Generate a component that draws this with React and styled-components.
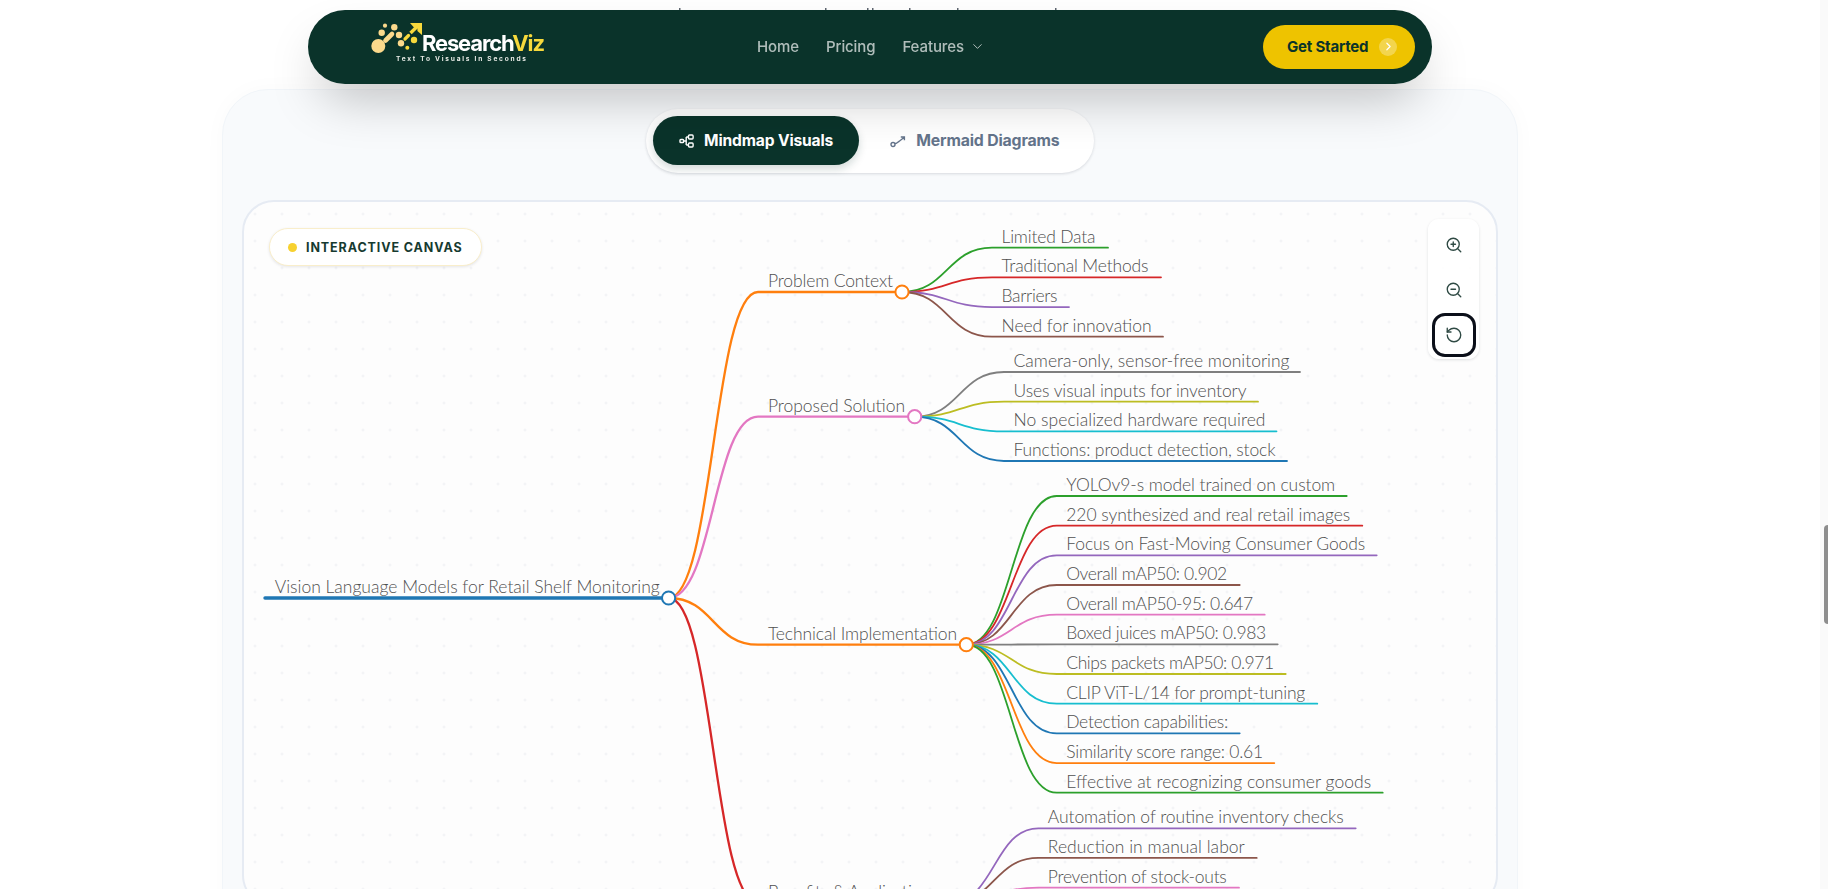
import React from "react"
import styled, { createGlobalStyle } from "styled-components"
import { ZoomIn, ZoomOut, RotateCcw, ChevronDown, ChevronRight } from "lucide-react"

const GREEN = "#0a332a"
const UI_FONT = `Inter, "Noto Sans", sans-serif`
const MAP_FONT = `Lato, "Open Sans", sans-serif`

const GlobalStyle = createGlobalStyle`
  html, body {
    margin: 0;
    padding: 0;
    height: 889px;
    overflow: hidden;
    background: #fff;
    font-family: ${UI_FONT};
  }
  * { box-sizing: border-box; }
`

const Shell = styled.div`
  width: 1740px;
  height: 889px;
  padding-top: 10px;
  display: flex;
  flex-direction: column;
  align-items: center;
  overflow: hidden;
`

const Nav = styled.nav`
  position: relative;
  z-index: 5;
  flex: none;
  width: 1124px;
  height: 73.5px;
  padding: 0 17px 0 52px;
  display: flex;
  align-items: center;
  background: ${GREEN};
  border-radius: 37px;
  box-shadow: 0 25px 50px -12px rgba(0, 0, 0, 0.25);
`

const NavLinks = styled.div`
  margin-left: 197px;
  display: flex;
  align-items: center;
  gap: 27px;
`

const NavLink = styled.a`
  display: flex;
  align-items: center;
  gap: 6px;
  color: rgba(255, 255, 255, 0.68);
  font-size: 15px;
  font-weight: 500;
  letter-spacing: -0.1px;
`

const GetStarted = styled.button`
  margin-left: auto;
  width: 152px;
  height: 44px;
  padding: 0 18px 0 24px;
  display: flex;
  align-items: center;
  justify-content: space-between;
  border: 0;
  border-radius: 22px;
  background: #eec300;
  color: ${GREEN};
  font-family: inherit;
  font-size: 15px;
  font-weight: 700;
  letter-spacing: -0.2px;
`

const ArrowDot = styled.span`
  width: 18px;
  height: 18px;
  display: flex;
  align-items: center;
  justify-content: center;
  border-radius: 50%;
  background: rgba(255, 255, 255, 0.3);
  color: #fff;
`

const Panel = styled.section`
  flex: none;
  width: 1296px;
  margin-top: 5.5px;
  padding: 19px 19px 60px;
  display: flex;
  flex-direction: column;
  align-items: center;
  background: #f8fafc;
  border: 1px solid #f1f5f9;
  border-radius: 46px;
  box-shadow: 0 0 24px rgba(15, 23, 42, 0.025);
`

const TabBar = styled.div`
  width: 448px;
  height: 64px;
  padding: 7px;
  display: flex;
  gap: 3px;
  background: #fff;
  border-radius: 32px;
  box-shadow: 0 1px 3px rgba(15, 23, 42, 0.14);
`

const Tab = styled.button`
  height: 49px;
  padding: ${(p) => (p.$active ? "0 26px" : "0 24px 0 28px")};
  display: flex;
  align-items: center;
  gap: ${(p) => (p.$active ? "9px" : "10px")};
  flex: none;
  border: 0;
  border-radius: 25px;
  font-family: inherit;
  font-size: ${(p) => (p.$active ? "15.6px" : "15.8px")};
  font-weight: 700;
  letter-spacing: -0.15px;
  background: ${(p) => (p.$active ? GREEN : "transparent")};
  color: ${(p) => (p.$active ? "#fff" : "#64748b")};
  box-shadow: ${(p) => (p.$active ? "0 4px 8px rgba(10, 51, 42, 0.18)" : "none")};
`

const Canvas = styled.div`
  position: relative;
  flex: none;
  width: 1256px;
  height: 707px;
  margin-top: 27px;
  background-color: #fdfdfd;
  background-image: radial-gradient(circle, #f0f1f4 1px, transparent 1.4px);
  background-size: 27px 27px;
  background-position: -2.5px -1.5px;
  border: 2px solid #e6ebf3;
  border-radius: 32px;
  overflow: hidden;
`

const Badge = styled.div`
  position: absolute;
  left: 25px;
  top: 26px;
  width: 213px;
  height: 38px;
  padding-left: 18px;
  display: flex;
  align-items: center;
  gap: 9px;
  background: #fff;
  border: 1px solid #f9eecb;
  border-radius: 19px;
  box-shadow: 0 1px 3px rgba(15, 23, 42, 0.1);
  color: #163a30;
  font-size: 12.5px;
  font-weight: 700;
  letter-spacing: 0.9px;
  text-transform: uppercase;
`

const BadgeDot = styled.span`
  width: 9px;
  height: 9px;
  border-radius: 50%;
  background: #f7d130;
`

const Controls = styled.div`
  position: absolute;
  right: 17px;
  top: 17px;
  width: 51px;
  height: 140px;
  padding: 4px 3px 0;
  display: flex;
  flex-direction: column;
  align-items: center;
  gap: 1px;
  background: rgba(255, 255, 255, 0.85);
  border-radius: 11px;
  box-shadow: 0 1px 3px rgba(15, 23, 42, 0.12);
`

const ControlButton = styled.button`
  flex: none;
  width: 44px;
  height: 44px;
  display: flex;
  align-items: center;
  justify-content: center;
  background: transparent;
  color: #2f4a44;
  border: ${(p) => (p.$focused ? "3px solid #0b0f19" : "0")};
  border-radius: 13px;
  padding: 0;
`

const MapSvg = styled.svg`
  display: block;
  font-family: ${MAP_FONT};
  font-size: 17.5px;
  font-weight: 300;
`

const Scrollbar = styled.div`
  position: fixed;
  top: 0;
  right: 0;
  width: 8px;
  height: 889px;
  background: #fafafa;
`

const ScrollThumb = styled.div`
  position: absolute;
  right: 0;
  top: 525px;
  width: 4px;
  height: 99px;
  background: #8e8e8e;
  border-radius: 4px 0 0 4px;
`

const Remnants = styled.svg`
  position: fixed;
  left: 0;
  top: 0;
`

const LEAF_STEP = 29.67

const branches = [
  {
    label: "Problem Context", color: "#ff7f0e", y: 292, cx: 902, textWidth: 125,
    leafX: 992, firstY: 247.7,
    leaves: [
      ["Limited Data", "#2ca02c", 1108, 94],
      ["Traditional Methods", "#d62728", 1161, 147],
      ["Barriers", "#9467bd", 1069, 56],
      ["Need for innovation", "#8c564b", 1163, 150],
    ],
  },
  {
    label: "Proposed Solution", color: "#e377c2", y: 416.7, cx: 914.7, textWidth: 137,
    leafX: 1004, firstY: 372,
    leaves: [
      ["Camera-only, sensor-free monitoring", "#7f7f7f", 1300, 276],
      ["Uses visual inputs for inventory", "#bcbd22", 1258, 233],
      ["No specialized hardware required", "#17becf", 1276.5, 252],
      ["Functions: product detection, stock", "#1f77b4", 1287, 262],
    ],
  },
  {
    label: "Technical Implementation", color: "#ff7f0e", y: 644.7, cx: 966.3, textWidth: 189,
    leafX: 1056.7, firstY: 496,
    leaves: [
      ["YOLOv9-s model trained on custom", "#2ca02c", 1346.7, 269],
      ["220 synthesized and real retail images", "#d62728", 1362.3, 284],
      ["Focus on Fast-Moving Consumer Goods", "#9467bd", 1376.7, 299],
      ["Overall mAP50: 0.902", "#8c564b", 1239.7, 161],
      ["Overall mAP50-95: 0.647", "#e377c2", 1264.7, 187],
      ["Boxed juices mAP50: 0.983", "#7f7f7f", 1277.7, 200],
      ["Chips packets mAP50: 0.971", "#bcbd22", 1285.7, 208],
      ["CLIP ViT-L/14 for prompt-tuning", "#17becf", 1317.3, 239],
      ["Detection capabilities:", "#1f77b4", 1239.7, 162],
      ["Similarity score range: 0.61", "#ff7f0e", 1274.3, 197],
      ["Effective at recognizing consumer goods", "#2ca02c", 1382.7, 305],
    ],
  },
  {
    label: "Benefits & Applications", color: "#d62728", y: 903, cx: 950, textWidth: 170,
    leafX: 1038.3, firstY: 828.3,
    leaves: [
      ["Automation of routine inventory checks", "#9467bd", 1355.7, 296],
      ["Reduction in manual labor", "#8c564b", 1256.7, 197],
      ["Prevention of stock-outs", "#e377c2", 1239, 179],
    ],
  },
]

const ROOT = { x: 668.6, y: 598 }
const BRANCH_X = 758

// same curve markmap draws: mid-x control points, then a straight run under the label
const link = (sx, sy, tx, ty, endX) => {
  const mx = (sx + tx) / 2
  return `M${sx},${sy} C${mx},${sy} ${mx},${ty} ${tx},${ty} H${endX}`
}

function MindMap() {
  return (
    <MapSvg width="1252" height="703" viewBox="244 202 1252 703" fill="none">
      <g strokeLinecap="round">
        {branches.map((b) => (
          <path
            key={b.label}
            d={link(ROOT.x, ROOT.y, BRANCH_X, b.y, b.cx)}
            stroke={b.color}
            strokeWidth="2.3"
          />
        ))}
        {branches.map((b) =>
          b.leaves.map(([label, color, end], i) => (
            <path
              key={label}
              d={link(b.cx, b.y, b.leafX, b.firstY + i * LEAF_STEP, end)}
              stroke={color}
              strokeWidth="1.8"
            />
          ))
        )}
        <path d={`M265,${ROOT.y} H${ROOT.x}`} stroke="#1f77b4" strokeWidth="3.4" />
      </g>

      <g fill="#505050">
        <text x="274.7" y={ROOT.y - 5} textLength="385">
          Vision Language Models for Retail Shelf Monitoring
        </text>
        {branches.map((b) => (
          <text key={b.label} x="768" y={b.y - 5} textLength={b.textWidth}>
            {b.label}
          </text>
        ))}
        {branches.map((b) =>
          b.leaves.map(([label, , , width], i) => (
            <text
              key={label}
              x={b.leafX + 9.5}
              y={b.firstY + i * LEAF_STEP - 5}
              textLength={width}
            >
              {label}
            </text>
          ))
        )}
      </g>

      <circle cx={ROOT.x} cy={ROOT.y} r="6.6" fill="#fff" stroke="#1f77b4" strokeWidth="2" />
      {branches.map((b) => (
        <circle key={b.label} cx={b.cx} cy={b.y} r="6.6" fill="#fff" stroke={b.color} strokeWidth="2" />
      ))}
    </MapSvg>
  )
}

function Logo() {
  return (
    <svg width="200" height="70" viewBox="0 0 200 70" style={{ marginTop: -3 }}>
      <g fill="#fcd98c">
        <circle cx="18.3" cy="36" r="7" />
        <circle cx="25" cy="15.7" r="2.1" />
        <circle cx="21.7" cy="22.7" r="3.2" />
        <circle cx="34.3" cy="17.3" r="3.2" />
        <path d="M25.5 30.5 L32 24" stroke="#fcd98c" strokeWidth="4.6" strokeLinecap="round" />
        <circle cx="39" cy="25" r="3.2" />
        <circle cx="41" cy="33.3" r="3.2" />
      </g>
      <g fill="#f7d93c">
        <circle cx="47.3" cy="37.7" r="2" />
        <circle cx="54" cy="30" r="3.2" />
        <path d="M45 29 L48.5 25.5" stroke="#f7d93c" strokeWidth="3.2" strokeLinecap="round" />
        <path d="M50.5 23 L58 15.8" stroke="#f7d93c" strokeWidth="3.4" />
        <path d="M50 13 H62 V25 L57.4 21 V17.6 H54 Z" />
      </g>
      <text x="62" y="41" fontFamily="Inter, sans-serif" fontSize="22" fontWeight="700" fill="#fff" textLength="123">
        Research<tspan fill="#f7d93c">Viz</tspan>
      </text>
      <text x="36" y="50.5" fontFamily="Inter, sans-serif" fontSize="6.6" fontWeight="700" fill="#e8ebe6" textLength="130">
        Text To Visuals In Seconds
      </text>
    </svg>
  )
}

const MindmapIcon = () => (
  <svg width="16" height="16" viewBox="0 0 16 16" fill="none" stroke="currentColor" strokeWidth="1.4">
    <rect x="1" y="6.5" width="3.6" height="3" rx="0.8" />
    <rect x="9.5" y="2" width="4.6" height="4" rx="0.9" />
    <rect x="9.5" y="10" width="4.6" height="4" rx="0.9" />
    <path d="M4.6 8 H7.2 M7.2 4 V12 M7.2 4 H9.5 M7.2 12 H9.5" />
  </svg>
)

const MermaidIcon = () => (
  <svg width="16" height="16" viewBox="0 0 16 16" fill="none" stroke="currentColor" strokeWidth="1.4">
    <circle cx="3" cy="11.5" r="2" />
    <path d="M5 10.5 C7 10.5 7.5 9 9 8.5 L14 4.5 M10.8 4 H14.4 V7.2" />
  </svg>
)

export default function App() {
  return (
    <>
      <GlobalStyle />
      <Remnants width="1828" height="10" viewBox="0 0 1828 10">
        {[679, 825, 867, 872, 909, 957, 1055].map((x) => (
          <rect key={x} x={x} y="8" width="1.5" height="2" fill="#5f6670" />
        ))}
      </Remnants>
      <Shell>
        <Nav>
          <Logo />
          <NavLinks>
            <NavLink>Home</NavLink>
            <NavLink>Pricing</NavLink>
            <NavLink>
              Features <ChevronDown size={15} strokeWidth={1.6} />
            </NavLink>
          </NavLinks>
          <GetStarted>
            Get Started
            <ArrowDot>
              <ChevronRight size={13} strokeWidth={2.2} />
            </ArrowDot>
          </GetStarted>
        </Nav>

        <Panel>
          <TabBar>
            <Tab $active>
              <MindmapIcon />
              Mindmap Visuals
            </Tab>
            <Tab>
              <MermaidIcon />
              Mermaid Diagrams
            </Tab>
          </TabBar>

          <Canvas>
            <MindMap />
            <Badge>
              <BadgeDot />
              Interactive Canvas
            </Badge>
            <Controls>
              <ControlButton>
                <ZoomIn size={18} strokeWidth={1.8} />
              </ControlButton>
              <ControlButton>
                <ZoomOut size={18} strokeWidth={1.8} />
              </ControlButton>
              <ControlButton $focused>
                <RotateCcw size={18} strokeWidth={1.8} />
              </ControlButton>
            </Controls>
          </Canvas>
        </Panel>
      </Shell>
      <Scrollbar>
        <ScrollThumb />
      </Scrollbar>
    </>
  )
}
